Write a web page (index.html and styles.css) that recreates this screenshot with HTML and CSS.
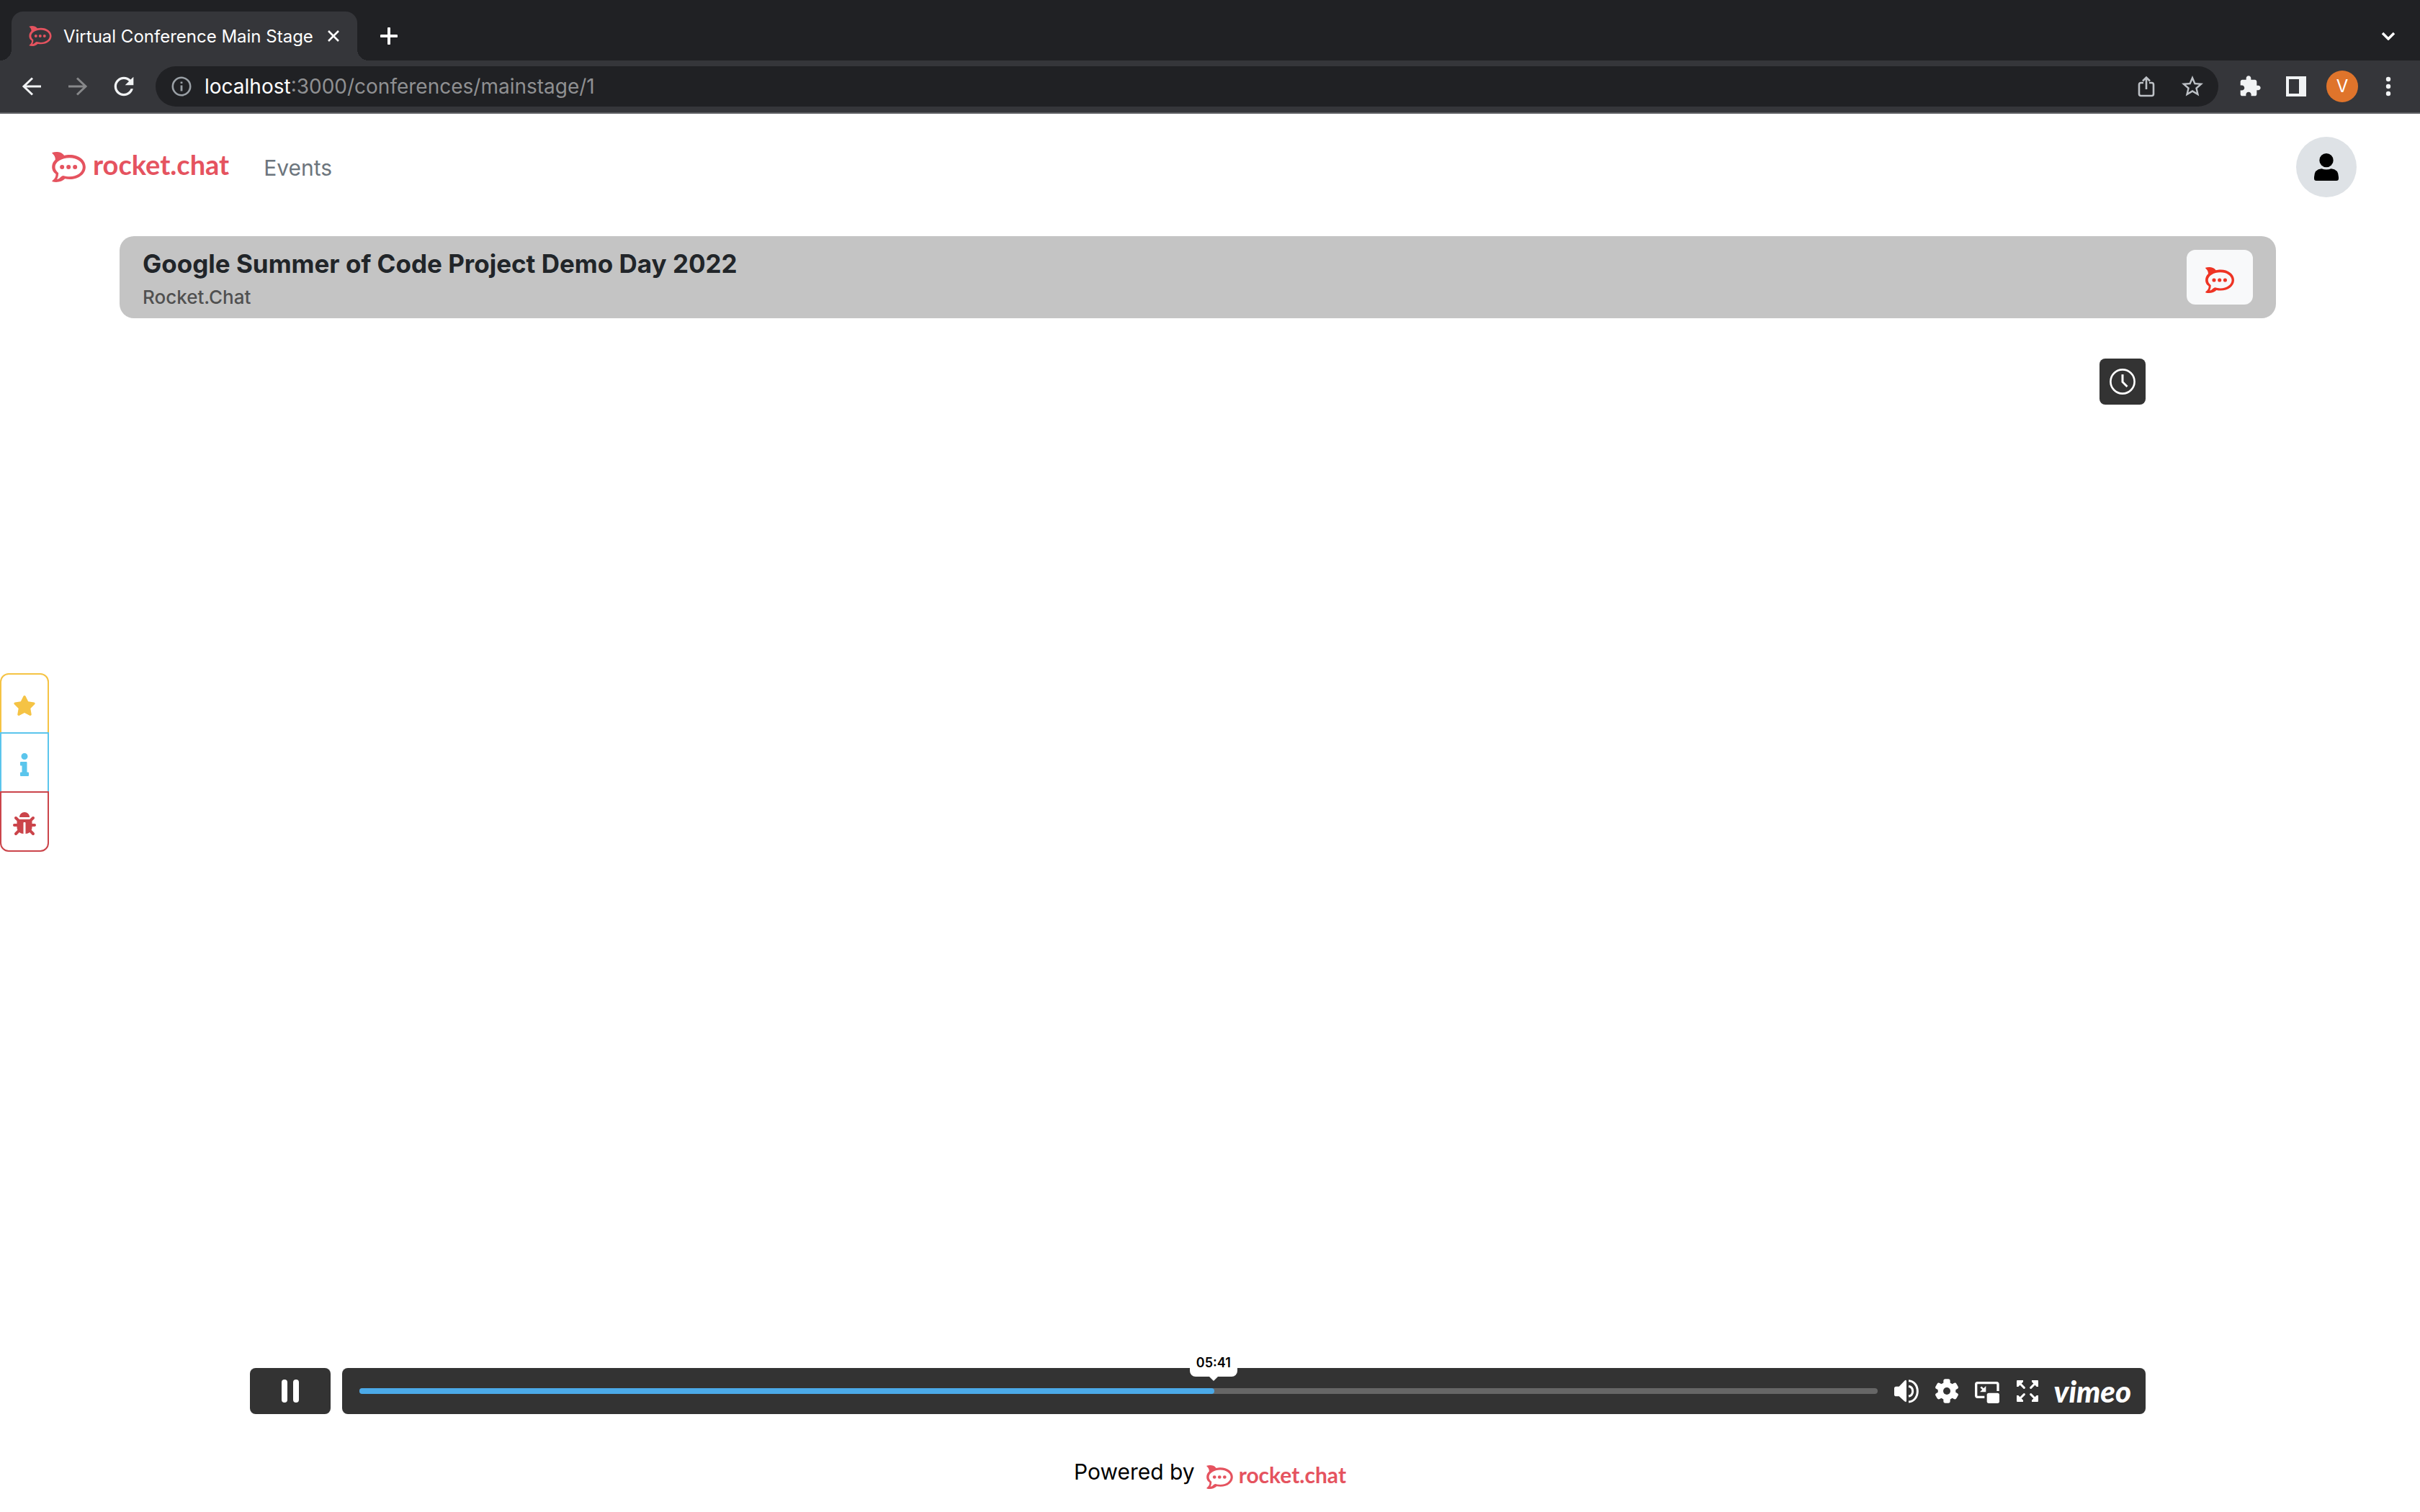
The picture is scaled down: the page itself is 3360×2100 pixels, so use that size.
FILE: index.html
```html
<!DOCTYPE html>
<html lang="en">
<head>
<meta charset="utf-8">
<title>Virtual Conference Main Stage</title>
<link rel="stylesheet" href="styles.css">
</head>
<body>
<svg class="defs" aria-hidden="true">
  <symbol id="rocket" viewBox="0 0 140 126">
    <path fill-rule="evenodd" d="M1 3C17-2 40-1 51 15C58 13 65 12 74 12C111 12 140 34 140 63C140 92 111 114 74 114C67 114 60 113 54 112C42 124 22 129 2 124Q-1 122 2 119C12 112 17 102 16 92C5 85 0 75 0 63C0 50 5 40 14 32C14 21 9 13 2 7Q-1 4 1 3ZM13 63C13 73 19 81 27 88C27 97 25 106 21 114C33 112 36 102 46 99C55 101 64 103 73 103C104 103 128 85 128 63C128 42 104 25 73 25C40 25 13 42 13 63Z"/>
    <circle cx="42" cy="63" r="9"/><circle cx="69" cy="63" r="9"/><circle cx="96" cy="63" r="9"/>
  </symbol>
</svg>

<header class="browser">
  <div class="tabs">
    <div class="tab">
      <svg class="favicon"><use href="#rocket"/></svg>
      <span class="tab-title">Virtual Conference Main Stage</span>
      <button class="tab-close" aria-label="Close tab"><svg width="18" height="18" viewBox="0 0 18 18"><path d="M2 2L16 16M16 2L2 16" stroke="currentColor" stroke-width="2.600"/></svg></button>
    </div>
    <button class="tool" aria-label="New tab"><svg width="24" height="24" viewBox="0 0 24 24"><path d="M12 1.500V22.500M1.500 12H22.500" stroke="currentColor" stroke-width="4" stroke-linecap="round"/></svg></button>
    <button class="tool search-tabs" aria-label="Search tabs"><svg width="20" height="12" viewBox="0 0 20 12"><path d="M2 2L10 10L18 2" fill="none" stroke="currentColor" stroke-width="3.500"/></svg></button>
  </div>
  <div class="toolbar">
    <button class="tool" aria-label="Back"><svg width="28" height="28" viewBox="0 0 28 28"><path d="M27 14H3M15 2.500L3 14L15 25.500" fill="none" stroke="currentColor" stroke-width="3"/></svg></button>
    <button class="tool dim" aria-label="Forward"><svg width="28" height="28" viewBox="0 0 28 28"><path d="M1 14H25M13 2.500L25 14L13 25.500" fill="none" stroke="currentColor" stroke-width="3"/></svg></button>
    <button class="tool" aria-label="Reload"><svg width="40" height="40" viewBox="0 0 24 24"><path fill="currentColor" d="M17.650 6.350C16.200 4.900 14.210 4 12 4c-4.420 0-7.990 3.580-7.990 8s3.570 8 7.990 8c3.730 0 6.840-2.550 7.730-6h-2.080c-.82 2.330-3.040 4-5.650 4-3.310 0-6-2.690-6-6s2.690-6 6-6c1.660 0 3.140.69 4.220 1.780L13 11h7V4l-2.350 2.350z"/></svg></button>
    <div class="omnibox">
      <button class="tool info" aria-label="Site information"><svg width="28" height="28" viewBox="0 0 28 28"><circle cx="14" cy="14" r="12.200" fill="none" stroke="currentColor" stroke-width="2.600"/><path d="M14 12.500V20.500M14 7.500V10" stroke="currentColor" stroke-width="2.800"/></svg></button>
      <label class="host" for="url">localhost</label>
      <input class="url" id="url" type="text" value=":3000/conferences/mainstage/1">
      <button class="tool soft" aria-label="Share"><svg width="24" height="30" viewBox="0 0 24 30"><path d="M8 10H4.500Q2 10 2 12.500V25.500Q2 28 4.500 28H19.500Q22 28 22 25.500V12.500Q22 10 19.500 10H16M12 19V3M7 7.500L12 2.500L17 7.500" fill="none" stroke="currentColor" stroke-width="2.600"/></svg></button>
      <button class="tool soft" aria-label="Bookmark"><svg width="36" height="36" viewBox="0 0 24 24"><path fill="currentColor" d="M22 9.240l-7.190-.62L12 2 9.190 8.630 2 9.240l5.460 4.730L5.820 21 12 17.270 18.180 21l-1.630-7.030L22 9.240zM12 15.400l-3.760 2.270 1-4.280-3.320-2.880 4.380-.38L12 6.100l1.710 4.040 4.380.38-3.320 2.880 1 4.280L12 15.400z"/></svg></button>
    </div>
    <button class="tool" aria-label="Extensions"><svg width="32" height="32" viewBox="0 0 24 24"><path fill="currentColor" d="M20.500 11H19V7c0-1.100-.9-2-2-2h-4V3.500C13 2.120 11.880 1 10.500 1S8 2.120 8 3.500V5H4c-1.100 0-1.990.9-1.990 2v3.800H3.500c1.490 0 2.700 1.210 2.700 2.700s-1.210 2.700-2.700 2.700H2V20c0 1.100.9 2 2 2h3.800v-1.500c0-1.490 1.210-2.700 2.700-2.700 1.490 0 2.700 1.210 2.700 2.700V22H17c1.100 0 2-.9 2-2v-4h1.500c1.380 0 2.500-1.120 2.500-2.500S21.880 11 20.500 11z"/></svg></button>
    <button class="tool" aria-label="Side panel"><svg width="28" height="28" viewBox="0 0 28 28"><path fill="currentColor" fill-rule="evenodd" d="M0 0H28V28H0ZM4 4V24H18V4Z"/></svg></button>
    <button class="tool" aria-label="Profile"><span class="profile">V</span></button>
    <button class="tool" aria-label="Menu"><svg width="8" height="28" viewBox="0 0 8 28"><g fill="currentColor"><circle cx="4" cy="4" r="3.200"/><circle cx="4" cy="14" r="3.200"/><circle cx="4" cy="24" r="3.200"/></g></svg></button>
  </div>
</header>

<nav class="nav">
  <a class="brand" href="#"><svg class="brand-icon"><use href="#rocket"/></svg><span class="brand-name">rocket.chat</span></a>
  <a class="nav-link" href="#">Events</a>
  <button class="user" aria-label="Account"><svg width="34" height="38" viewBox="0 0 102 114"><circle cx="51" cy="29" r="29"/><path d="M31 64Q51 71 71 64Q101 66 102 99V105Q102 114 93 114H9Q0 114 0 105V99Q1 66 31 64Z"/></svg></button>
</nav>

<aside class="side">
  <button class="side-btn star" aria-label="Star"><svg width="32" height="28" viewBox="0 0 576 512"><path fill="currentColor" d="M259.300 17.800L194 150.200 47.900 171.500c-26.200 3.800-36.700 36.100-17.700 54.600l105.700 103-25 145.500c-4.500 26.300 23.200 46 46.400 33.700L288 439.600l130.700 68.700c23.200 12.200 50.900-7.400 46.400-33.700l-25-145.500 105.700-103c19-18.500 8.500-50.800-17.700-54.600L382 150.200 316.700 17.800c-11.700-23.600-45.600-23.900-57.400 0z"/></svg></button>
  <button class="side-btn about" aria-label="Information"><svg width="12" height="32" viewBox="0 0 192 512"><path fill="currentColor" d="M20 424.229h20V279.771H20c-11.046 0-20-8.954-20-20V212c0-11.046 8.954-20 20-20h112c11.046 0 20 8.954 20 20v212.229h20c11.046 0 20 8.954 20 20V492c0 11.046-8.954 20-20 20H20c-11.046 0-20-8.954-20-20v-47.771c0-11.046 8.954-20 20-20zM96 0C56.235 0 24 32.235 24 72s32.235 72 72 72 72-32.235 72-72S135.764 0 96 0z"/></svg></button>
  <button class="side-btn bug" aria-label="Report a bug"><svg width="32" height="32" viewBox="0 0 512 512"><path fill="currentColor" d="M511.988 288.900c-.478 17.430-15.217 31.100-32.653 31.100H424v16c0 21.864-4.882 42.584-13.600 61.145l60.228 60.228c12.496 12.497 12.496 32.758 0 45.255-12.498 12.497-32.759 12.496-45.256 0l-54.736-54.736C345.886 467.965 314.351 480 280 480V236c0-6.627-5.373-12-12-12h-24c-6.627 0-12 5.373-12 12v244c-34.351 0-65.886-12.035-90.636-32.108l-54.736 54.736c-12.498 12.497-32.759 12.496-45.256 0-12.496-12.497-12.496-32.758 0-45.255l60.228-60.228C92.882 378.584 88 357.864 88 336v-16H32.666C15.230 320 .491 306.330.013 288.900-.484 270.816 14.028 256 32 256h56v-58.745l-46.628-46.628c-12.496-12.497-12.496-32.758 0-45.255 12.498-12.497 32.758-12.497 45.256 0L141.255 160h229.489l54.627-54.627c12.498-12.497 32.758-12.497 45.256 0 12.496 12.497 12.496 32.758 0 45.255L424 197.255V256h56c17.972 0 32.484 14.816 31.988 32.900zM257 0c-61.856 0-112 50.144-112 112h224C369 50.144 318.856 0 257 0z"/></svg></button>
</aside>

<main class="stage">
  <section class="banner">
    <div class="banner-text">
      <h1 class="title">Google Summer of Code Project Demo Day 2022</h1>
      <p class="subtitle">Rocket.Chat</p>
    </div>
    <button class="org" aria-label="Rocket.Chat"><svg class="org-icon"><use href="#rocket"/></svg></button>
  </section>

  <section class="player" aria-label="Video player">
    <button class="later" aria-label="Watch later"><svg width="36" height="36" viewBox="0 0 36 36"><g fill="none" stroke="#fff"><circle cx="18" cy="18" r="16.600" stroke-width="2.600"/><path d="M18 8V18.500L24.500 25" stroke-width="3"/></g></svg></button>
    <div class="controls">
      <button class="pause" aria-label="Pause"><svg width="24" height="32" viewBox="0 0 24 32"><rect width="8" height="32" rx="4" fill="#fff"/><rect x="16" width="8" height="32" rx="4" fill="#fff"/></svg></button>
      <div class="bar">
        <div class="seek">
          <div class="played" style="width:56.300%"></div>
          <input class="range" type="range" min="0" max="1000" value="563" aria-label="Seek">
          <output class="time" style="left:56.300%">05:41</output>
        </div>
        <div class="actions">
          <button class="action" aria-label="Volume"><svg width="34" height="34" viewBox="0 0 102 102"><path fill="#fff" d="M0 40Q0 32 8 32H20L43 8Q51 2 51 11V91Q51 100 43 94L20 73H8Q0 73 0 65Z"/><g fill="none" stroke="#fff" stroke-width="9"><path d="M60 8C83 9 97 29 97 52C97 75 83 95 60 96"/><path d="M60 31C71 33 77 41 77 52C77 63 71 71 60 73"/></g></svg></button>
          <button class="action" aria-label="Settings"><svg width="34" height="34" viewBox="-51 -51 102 102"><g fill="#fff"><circle r="37"/><rect x="-14" y="-50" width="28" height="100" rx="8"/><rect x="-14" y="-50" width="28" height="100" rx="8" transform="rotate(60)"/><rect x="-14" y="-50" width="28" height="100" rx="8" transform="rotate(120)"/></g><circle r="15" fill="#333"/></svg></button>
          <button class="action" aria-label="Picture in picture"><svg width="34" height="34" viewBox="0 0 102 102"><path d="M96 51V23Q96 17 90 17H11Q5 17 5 23V70Q5 76 11 76H40" fill="none" stroke="#fff" stroke-width="10"/><rect x="50" y="59" width="52" height="43" rx="8" fill="#fff"/><path d="M25 34L41 50" stroke="#fff" stroke-width="8"/><path d="M46 30V55H21Z" fill="#fff"/></svg></button>
          <button class="action" aria-label="Fullscreen"><svg width="30" height="30" viewBox="0 0 90 90"><path d="M6 6L31 31M84 6L59 31M6 84L31 59M84 84L59 59" stroke="#fff" stroke-width="9" stroke-linecap="round"/><path fill="#fff" d="M3 0H27V7L7 27H0V3Q0 0 3 0ZM63 0H87Q90 0 90 3V27H83L63 7ZM0 63H7L27 83V90H3Q0 90 0 87ZM83 63H90V87Q90 90 87 90H63V83Z"/></svg></button>
          <a class="vimeo" href="#">vimeo</a>
        </div>
      </div>
    </div>
  </section>
</main>

<footer class="footer">
  <span class="powered">Powered by</span>
  <a class="brand brand-small" href="#"><svg class="brand-icon"><use href="#rocket"/></svg><span class="brand-name">rocket.chat</span></a>
</footer>
</body>
</html>
```
FILE: styles.css
```css
* {
  box-sizing: border-box;
}

body {
  margin: 0;
  min-height: 100vh;
  display: flex;
  flex-direction: column;
  background: #fff;
  color: #212529;
  font-family: Inter, "Liberation Sans", sans-serif;
}

button {
  margin: 0;
  padding: 0;
  border: 0;
  background: none;
  color: inherit;
  font: inherit;
  cursor: pointer;
  display: flex;
  align-items: center;
  justify-content: center;
  flex-shrink: 0;
}

svg {
  display: block;
  flex-shrink: 0;
}

a {
  text-decoration: none;
}

.defs {
  position: absolute;
  width: 0;
  height: 0;
}

/* Browser frame */

.browser {
  background: #35363a;
  border-bottom: 2px solid #5f6064;
  color: #f1f3f4;
}

.tabs {
  height: 84px;
  padding: 16px 12px 0 16px;
  display: flex;
  background: #202124;
  color: #fff;
}

.tab {
  position: relative;
  width: 480px;
  height: 68px;
  padding: 0 24px;
  display: flex;
  align-items: center;
  border-radius: 16px 16px 0 0;
  background: #35363a;
}

.tab::before,
.tab::after {
  content: "";
  position: absolute;
  bottom: 0;
  width: 16px;
  height: 16px;
}

.tab::before {
  right: 100%;
  background: radial-gradient(circle at 0 0, #202124 16px, #35363a 16px);
}

.tab::after {
  left: 100%;
  background: radial-gradient(circle at 100% 0, #202124 16px, #35363a 16px);
}

.favicon {
  width: 32px;
  height: 28px;
  fill: #e5535f;
}

.tab-title {
  margin-left: 16px;
  flex: 1;
  font-size: 24px;
  white-space: nowrap;
}

.tab-close {
  width: 18px;
  height: 32px;
}

.tool {
  width: 64px;
  height: 64px;
}

.tabs .tool {
  height: 68px;
  margin-left: 12px;
}

.tabs .search-tabs {
  margin-left: auto;
}

.toolbar {
  height: 72px;
  padding: 0 12px;
  display: flex;
  align-items: center;
}

.dim {
  color: #87888a;
}

.omnibox {
  flex: 1;
  height: 56px;
  margin: 0 12px;
  padding: 0 4px;
  display: flex;
  align-items: center;
  border-radius: 28px;
  background: #202124;
  font-size: 28px;
}

.host {
  color: #fff;
}

.info {
  color: #9aa0a6;
}

.soft {
  color: #bdc1c6;
}

.url {
  flex: 1;
  min-width: 0;
  padding: 0;
  border: 0;
  outline: 0;
  background: none;
  color: #8f9092;
  font: inherit;
}

.profile {
  width: 44px;
  height: 44px;
  border-radius: 50%;
  background: #df742b;
  color: #fff;
  font-size: 24px;
  line-height: 44px;
  text-align: center;
}

/* Site navigation */

.nav {
  height: 148px;
  padding: 0 88px 0 72px;
  display: flex;
  align-items: center;
}

.brand {
  display: flex;
  align-items: flex-start;
  gap: 10px;
  color: #e5535f;
  font-family: Lato, "Open Sans", sans-serif;
  font-size: 38px;
  font-weight: 700;
  line-height: 34px;
}

.brand-icon {
  width: 47px;
  height: 42px;
  fill: currentColor;
}

.nav-link {
  margin-left: 48px;
  padding-top: 2px;
  color: #6c757d;
  font-size: 30px;
}

.user {
  width: 84px;
  height: 84px;
  margin-left: auto;
  border-radius: 50%;
  background: #dee2e6;
}

/* Quick actions pinned to the left edge */

.side {
  position: fixed;
  top: 935px;
  left: 0;
  width: 68px;
}

.side-btn {
  width: 100%;
  height: 84px;
  padding-top: 6px;
  border: 2px solid currentColor;
  background: #fff;
}

.side-btn + .side-btn {
  margin-top: -2px;
}

.star {
  border-radius: 12px 12px 0 0;
  color: #f5c344;
}

.about {
  color: #5bc5ec;
}

.bug {
  border-radius: 0 0 12px 12px;
  color: #cb444a;
}

/* Stage */

.stage {
  flex: 1;
  margin: 22px 200px 0 166px;
  display: flex;
  flex-direction: column;
}

.banner {
  height: 114px;
  padding: 0 32px;
  display: flex;
  align-items: center;
  justify-content: space-between;
  border-radius: 20px;
  background: #c4c4c4;
}

.banner-text {
  padding-top: 8px;
}

.title {
  margin: 0;
  font-size: 35px;
  font-weight: 700;
  line-height: 48px;
}

.subtitle {
  margin: 0;
  color: #505050;
  font-size: 26px;
  font-weight: 500;
  line-height: 46px;
}

.org {
  width: 92px;
  height: 76px;
  padding-top: 8px;
  border-radius: 12px;
  background: #f8f9fa;
}

.org-icon {
  width: 40px;
  height: 36px;
  fill: #ee3424;
}

.player {
  flex: 1;
  padding: 56px 181px 0;
  display: flex;
  flex-direction: column;
  justify-content: space-between;
}

.later {
  width: 64px;
  height: 64px;
  align-self: flex-end;
  border-radius: 8px;
  background: #333;
}

.controls {
  display: flex;
  gap: 16px;
}

.pause {
  width: 112px;
  height: 64px;
  border-radius: 8px;
  background: #333;
}

.bar {
  flex: 1;
  height: 64px;
  padding: 0 20px 0 24px;
  display: flex;
  align-items: center;
  gap: 12px;
  border-radius: 8px;
  background: #333;
}

.seek {
  position: relative;
  flex: 1;
  height: 8px;
  border-radius: 4px;
  background: #666;
}

.played {
  height: 8px;
  border-radius: 4px;
  background: #4ba9e8;
}

.range {
  position: absolute;
  inset: 0;
  width: 100%;
  height: 8px;
  margin: 0;
  opacity: 0;
}

.time {
  position: absolute;
  bottom: 24px;
  width: 66px;
  height: 36px;
  margin-left: -34px;
  border-radius: 8px;
  background: #fff;
  color: #000;
  font-size: 18px;
  font-weight: 600;
  line-height: 34px;
  text-align: center;
}

.time::after {
  content: "";
  position: absolute;
  top: 100%;
  left: 50%;
  margin-left: -6px;
  border: 6px solid transparent;
  border-top-color: #fff;
}

.actions {
  display: flex;
  align-items: center;
}

.action {
  width: 56px;
  height: 64px;
}

.vimeo {
  width: 116px;
  color: #fff;
  font-family: Lato, sans-serif;
  font-size: 42px;
  font-style: italic;
  font-weight: 900;
  line-height: 56px;
  text-align: right;
}

/* Footer */

.footer {
  height: 136px;
  padding-bottom: 32px;
  display: flex;
  align-items: flex-end;
  justify-content: center;
  gap: 16px;
}

.powered {
  color: #000;
  font-size: 30px;
  line-height: 48px;
}

.brand-small {
  gap: 8px;
  font-size: 30px;
  line-height: 26px;
}

.brand-small .brand-icon {
  width: 37px;
  height: 33px;
}
```
